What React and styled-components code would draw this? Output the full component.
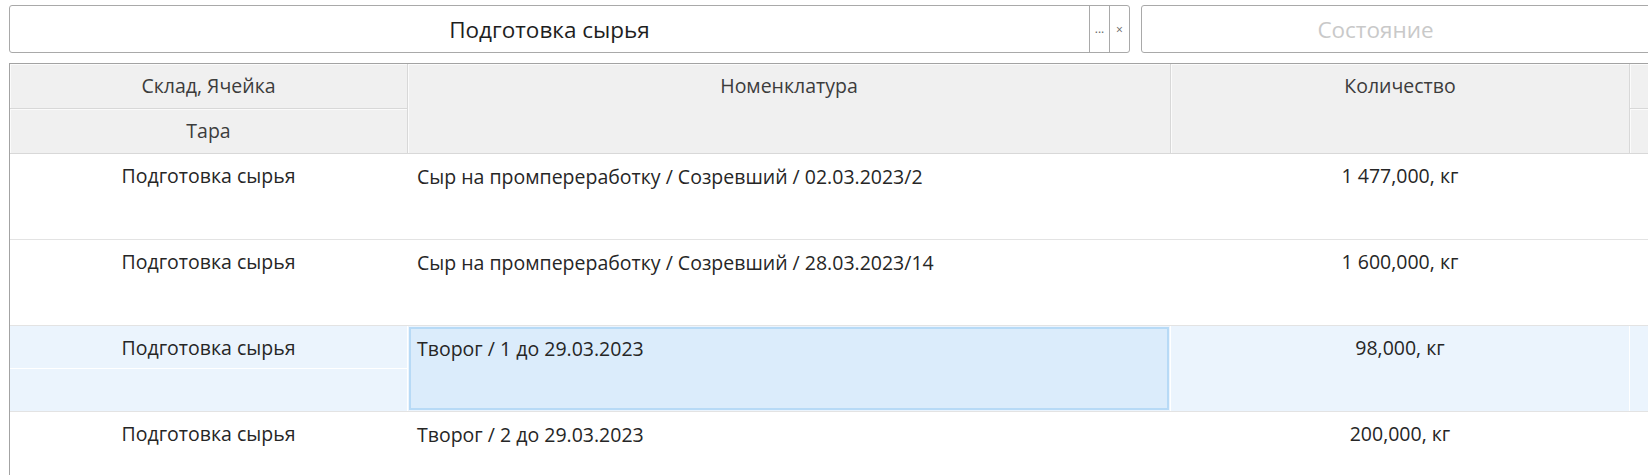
import React from 'react';
import styled, { createGlobalStyle } from 'styled-components';

const Global = createGlobalStyle`
  html, body { margin: 0; padding: 0; background: #fff; overflow: hidden; }
  body { font-family: "Open Sans", "Noto Sans", sans-serif; color: #262626; }
  * { box-sizing: border-box; }
`;

const COLS = '398px 763px 459px 240px';

const Page = styled.div`
  width: 1648px;
  height: 475px;
  overflow: hidden;
  padding: 5px 0 0 9px;
`;

const Toolbar = styled.div`
  display: flex;
  gap: 11px;
  height: 48px;
  width: max-content;
`;

const Field = styled.div`
  flex: none;
  display: flex;
  height: 48px;
  width: ${p => p.$w}px;
  border: 1px solid #a9a9a9;
  border-radius: 3px;
  background: #fff;
`;

const FieldText = styled.div`
  flex: none;
  width: ${p => p.$w}px;
  display: flex;
  align-items: center;
  justify-content: center;
  font-size: 22.5px;
  color: ${p => (p.$placeholder ? '#c9c9c9' : '#1e1e1e')};
`;

const FieldButton = styled.div`
  flex: none;
  width: 20px;
  border-left: 1px solid #a9a9a9;
  display: flex;
  align-items: center;
  justify-content: center;
  font-size: 12px;
  color: #666;
  padding-bottom: ${p => (p.$low ? '0' : '2px')};
`;

const Table = styled.div`
  margin-top: 10px;
  width: max-content;
  border-top: 1px solid #a3a3a3;
  border-left: 1px solid #a3a3a3;
`;

const HeaderRow = styled.div`
  display: grid;
  grid-template-columns: ${COLS};
  grid-template-rows: 45px 45px;
`;

const HeaderCell = styled.div`
  background: #f0f0f0;
  border-right: 1px solid #d8d8d8;
  border-bottom: 1px solid #d8d8d8;
  box-shadow: inset 1px 1px 0 #fbfbfb;
  grid-row: ${p => (p.$span ? '1 / span 2' : 'auto')};
  display: flex;
  justify-content: center;
  align-items: flex-start;
  line-height: 44px;
  font-size: 19.5px;
  color: #3c3c3c;
`;

const DataRow = styled.div`
  display: grid;
  grid-template-columns: ${COLS};
  height: 86px;
  border-bottom: 1px solid #e3e3e3;
  background: ${p => (p.$selected ? '#ebf4fd' : '#fff')};
`;

const LocationCell = styled.div`
  display: flex;
  flex-direction: column;
  border-right: 1px solid #fff;
`;

const SubCell = styled.div`
  height: ${p => (p.$first ? '43px' : 'auto')};
  flex: ${p => (p.$first ? 'none' : '1')};
  border-bottom: ${p => (p.$first ? '1px solid #fff' : 'none')};
  display: flex;
  align-items: center;
  justify-content: center;
  font-size: 19.5px;
`;

const NameCell = styled.div`
  padding: 1px;
  border-right: 1px solid #fff;
  display: flex;
`;

const NameBox = styled.div`
  flex: 1;
  border: 2px solid ${p => (p.$selected ? '#b7daf6' : 'transparent')};
  background: ${p => (p.$selected ? '#dbecfb' : 'transparent')};
  padding: 0 6px;
  line-height: 39px;
  font-size: 19.5px;
`;

const QtyCell = styled.div`
  text-align: center;
  line-height: 43px;
  font-size: 19.5px;
  border-right: 1px solid #fff;
`;

const EmptyCell = styled.div``;

const rows = [
  { loc: 'Подготовка сырья', name: 'Сыр на промпереработку / Созревший / 02.03.2023/2', qty: '1 477,000, кг' },
  { loc: 'Подготовка сырья', name: 'Сыр на промпереработку / Созревший / 28.03.2023/14', qty: '1 600,000, кг' },
  { loc: 'Подготовка сырья', name: 'Творог / 1 до 29.03.2023', qty: '98,000, кг', selected: true },
  { loc: 'Подготовка сырья', name: 'Творог / 2 до 29.03.2023', qty: '200,000, кг' },
];

export default function App() {
  return (
    <Page>
      <Global />
      <Toolbar>
        <Field $w={1121}>
          <FieldText $w={1079}>Подготовка сырья</FieldText>
          <FieldButton>...</FieldButton>
          <FieldButton $low>×</FieldButton>
        </Field>
        <Field $w={700}>
          <FieldText $w={467} $placeholder>Состояние</FieldText>
        </Field>
      </Toolbar>
      <Table>
        <HeaderRow>
          <HeaderCell>Склад, Ячейка</HeaderCell>
          <HeaderCell $span style={{ gridColumn: 2 }}>Номенклатура</HeaderCell>
          <HeaderCell $span style={{ gridColumn: 3 }}>Количество</HeaderCell>
          <HeaderCell style={{ gridColumn: 4 }} />
          <HeaderCell style={{ gridColumn: 1 }}>Тара</HeaderCell>
          <HeaderCell style={{ gridColumn: 4 }} />
        </HeaderRow>
        {rows.map((r, i) => (
          <DataRow key={i} $selected={r.selected}>
            <LocationCell>
              <SubCell $first>{r.loc}</SubCell>
              <SubCell />
            </LocationCell>
            <NameCell>
              <NameBox $selected={r.selected}>{r.name}</NameBox>
            </NameCell>
            <QtyCell>{r.qty}</QtyCell>
            <EmptyCell />
          </DataRow>
        ))}
      </Table>
    </Page>
  );
}
